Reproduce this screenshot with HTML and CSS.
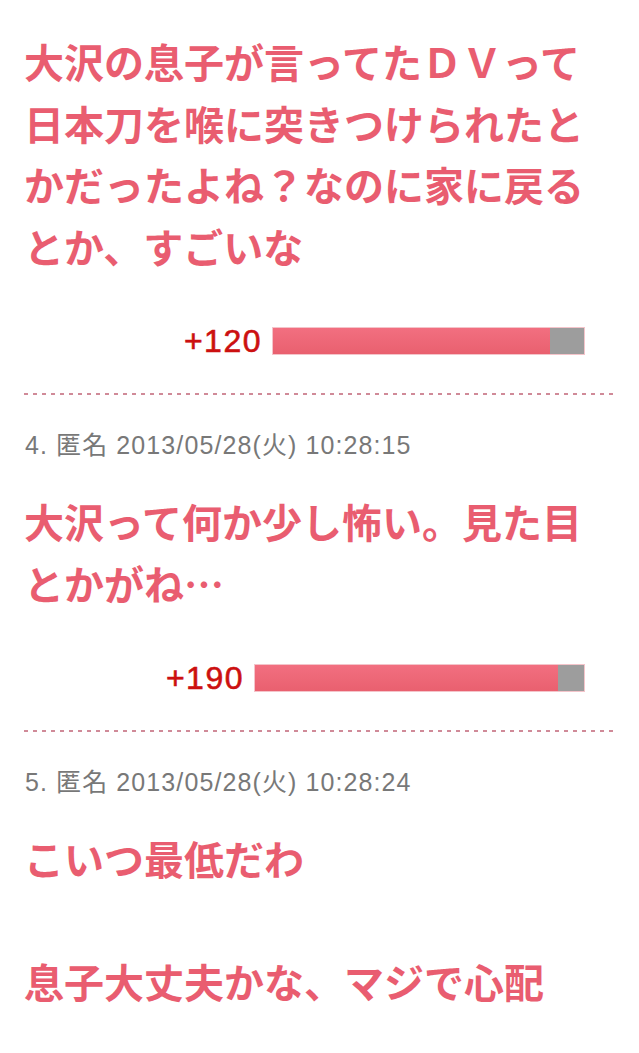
FILE: index.html
```html
<!DOCTYPE html>
<html lang="ja">
<head>
<meta charset="utf-8">
<link rel="stylesheet" href="styles.css">
</head>
<body>
<div class="thread">
  <div class="post first">
    <div class="body">大沢の息子が言ってたＤＶって日本刀を喉に突きつけられたとかだったよね？なのに家に戻るとか、すごいな</div>
    <div class="vote">
      <span class="score">+120</span>
      <span class="bar" style="width:311px"><span class="plus" style="width:89%"></span></span>
    </div>
  </div>
  <div class="sep"></div>
  <div class="post">
    <div class="meta">4. 匿名 2013/05/28(火) 10:28:15</div>
    <div class="body">大沢って何か少し怖い。見た目とかがね…</div>
    <div class="vote">
      <span class="score">+190</span>
      <span class="bar" style="width:329px"><span class="plus" style="width:92%"></span></span>
    </div>
  </div>
  <div class="sep"></div>
  <div class="post">
    <div class="meta">5. 匿名 2013/05/28(火) 10:28:24</div>
    <div class="body">こいつ最低だわ<br><br>息子大丈夫かな、マジで心配</div>
  </div>
</div>
</body>
</html>
```

FILE: styles.css
```css
html, body {
  margin: 0;
  padding: 0;
  background: #ffffff;
}
body {
  font-family: "Liberation Sans", "Noto Sans CJK JP", sans-serif;
  width: 639px;
  overflow: hidden;
}
.thread {
  padding: 31px 22px 0 24px;
}
.post {
  display: flex;
  flex-direction: column;
}
.body {
  font-family: "Noto Sans CJK JP", sans-serif;
  font-weight: 700;
  font-size: 40px;
  line-height: 61.5px;
  color: #e95d70;
  word-break: break-all;
}
.meta {
  font-size: 25px;
  line-height: 28px;
  color: #787878;
  margin: 36px 0 32px 1px;
  letter-spacing: 1.1px;
}
.vote {
  display: flex;
  justify-content: flex-end;
  align-items: center;
  gap: 11px;
  margin: 50px 33px 38px 0;
  height: 28px;
}
.score {
  font-size: 32px;
  font-weight: 400;
  -webkit-text-stroke: 0.6px #cc1010;
  color: #cc1010;
  letter-spacing: 1.5px;
}
.bar {
  display: flex;
  height: 26px;
  background: #9d9d9d;
  box-shadow: 0 0 0 1px #f4c4ca;
}
.plus {
  display: block;
  height: 100%;
  background: linear-gradient(#f26f80, #e9606f);
}
.sep {
  height: 2px;
  background: repeating-linear-gradient(to right, #d08a98 0 4px, transparent 4px 9px);
}
```
